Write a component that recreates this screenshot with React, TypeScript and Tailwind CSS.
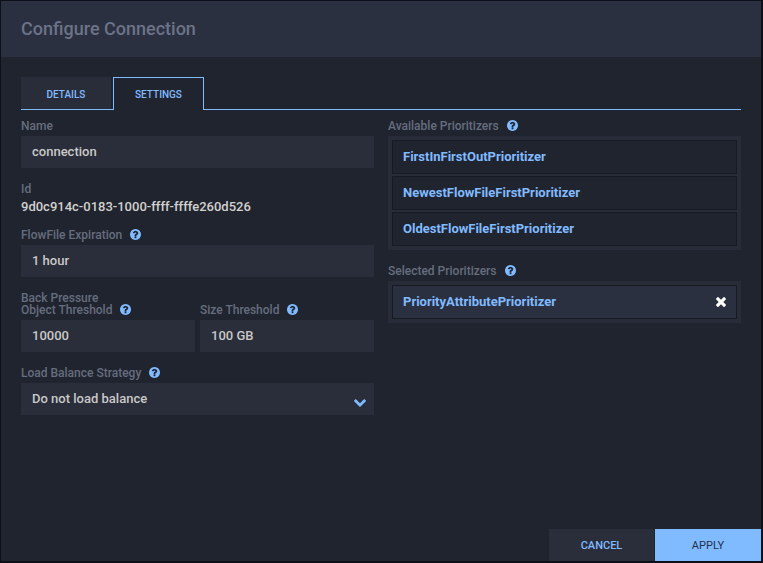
import { useState } from "react";
import type { ReactNode } from "react";

const labelClass = "block text-xs leading-3 font-medium text-[#666d7e]";
const fieldClass = "h-8 w-full bg-[#2a2e3b] px-[11px] text-[13px] font-medium text-[#c9c8c6] outline-none";

function QuestionIcon() {
  return (
    <svg viewBox="128 128 1536 1536" className="size-[11px]" fill="currentColor" aria-hidden="true">
      <path d="M1024 1376v-192q0-14-9-23t-23-9h-192q-14 0-23 9t-9 23v192q0 14 9 23t23 9h192q14 0 23-9t9-23zm256-672q0-88-55.5-163t-138.5-116-170-41q-243 0-371 213-15 24 8 42l132 100q7 6 19 6 16 0 25-12 53-68 86-92 34-24 86-24 48 0 85.5 26t37.5 59q0 38-20 61t-68 45q-63 28-115.5 86.5t-52.5 125.5v36q0 14 9 23t23 9h192q14 0 23-9t9-23q0-19 21.5-49.5t54.5-49.5q32-18 49-28.5t46-35 44.5-48 28-60.5 12.5-81zm384 192q0 209-103 385.5t-279.5 279.5-385.5 103-385.5-103-279.5-279.5-103-385.5 103-385.5 279.5-279.5 385.5-103 385.5 103 279.5 279.5 103 385.5z" />
    </svg>
  );
}

function ChevronIcon() {
  return (
    <svg
      viewBox="90 533 1612 1035"
      className="pointer-events-none absolute right-2 bottom-2 h-2 w-3 text-[#80bbff]"
      fill="currentColor"
      aria-hidden="true"
    >
      <path d="M1683 808l-742 741q-19 19-45 19t-45-19l-742-741q-19-19-19-45.5t19-45.5l166-165q19-19 45-19t45 19l531 531 531-531q19-19 45-19t45 19l166 165q19 19 19 45.5t-19 45.5z" />
    </svg>
  );
}

function RemoveIcon() {
  return (
    <svg viewBox="110 366 1188 1188" className="size-2.5" fill="currentColor" aria-hidden="true">
      <path d="M1298 1322q0 40-28 68l-136 136q-28 28-68 28t-68-28l-294-294-294 294q-28 28-68 28t-68-28l-136-136q-28-28-28-68t28-68l294-294-294-294q-28-28-28-68t28-68l136-136q28-28 68-28t68 28l294 294 294-294q28-28 68-28t68 28l136 136q28 28 28 68t-28 68l-294 294 294 294q28 28 28 68z" />
    </svg>
  );
}

function Help({ topic }: { topic: string }) {
  return (
    <button type="button" aria-label={`Help: ${topic}`} className="ml-2 text-[#80bbff]">
      <QuestionIcon />
    </button>
  );
}

function LabelRow({ id, help, children }: { id: string; help?: boolean; children: string }) {
  return (
    <div className="flex h-3 items-start">
      <label htmlFor={id} className={labelClass}>
        {children}
      </label>
      {help && <Help topic={children} />}
    </div>
  );
}

function TextField({ id, label, value, help }: { id: string; label: string; value: string; help?: boolean }) {
  return (
    <div className="flex flex-col gap-1">
      <LabelRow id={id} help={help}>{label}</LabelRow>
      <input id={id} type="text" defaultValue={value} className={`${fieldClass} pb-0.5`} />
    </div>
  );
}

function Prioritizers({ title, children }: { title: string; children: ReactNode }) {
  return (
    <section className="flex flex-col gap-1">
      <div className="flex h-3 items-start">
        <h2 className={labelClass}>{title}</h2>
        <Help topic={title} />
      </div>
      <ul className="flex flex-col gap-0.5 bg-[#282c38] p-1">{children}</ul>
    </section>
  );
}

const itemClass =
  "flex h-[34px] items-center justify-between border border-[#171a23] px-2.5 text-[13px] font-bold text-[#80bbff]";

export default function App() {
  const [tab, setTab] = useState("settings");
  const available = ["FirstInFirstOutPrioritizer", "NewestFlowFileFirstPrioritizer", "OldestFlowFileFirstPrioritizer"];

  return (
    <div className="flex min-h-screen bg-[#0d1019] pt-px pr-0.5 pb-0.5 pl-px font-['Roboto',sans-serif]">
      <div role="dialog" aria-labelledby="title" className="flex flex-1 flex-col bg-[#20242f]">
        <header className="flex h-14 items-center bg-[#2a303f] px-5">
          <h1 id="title" className="text-lg font-medium text-[#6c7388]">Configure Connection</h1>
        </header>

        <main className="flex-1 px-5 pt-5">
          <div role="tablist" className="flex h-[33px] text-[10px] font-medium text-[#80bbff]">
            <div className="flex w-[92px] border-b border-current pr-0.5">
              <button
                type="button"
                role="tab"
                aria-selected={tab === "details"}
                onClick={() => setTab("details")}
                className="flex-1 bg-[#292d3a] pt-0.5"
              >
                DETAILS
              </button>
            </div>
            <button
              type="button"
              role="tab"
              aria-selected={tab === "settings"}
              onClick={() => setTab("settings")}
              className="w-[91px] border border-b-0 border-current"
            >
              SETTINGS
            </button>
            <div className="flex-1 border-b border-current" />
          </div>

          <div className="grid grid-cols-2 gap-3.5 pt-2.5">
            <form className="flex flex-col">
              <TextField id="name" label="Name" value="connection" />
              <dl className="pt-[15px] pb-3.5">
                <dt className={labelClass}>Id</dt>
                <dd className="pt-1 text-[13px] leading-4 font-medium text-[#d2d1ce]">
                  9d0c914c-0183-1000-ffff-ffffe260d526
                </dd>
              </dl>
              <TextField id="expiration" label="FlowFile Expiration" value="1 hour" help />
              <fieldset className="mt-[15px]">
                <legend className={labelClass}>Back Pressure</legend>
                <div className="grid grid-cols-2 gap-[5px]">
                  <TextField id="objects" label="Object Threshold" value="10000" help />
                  <TextField id="size" label="Size Threshold" value="100 GB" help />
                </div>
              </fieldset>
              <div className="flex flex-col gap-1 pt-[15px]">
                <LabelRow id="strategy" help>Load Balance Strategy</LabelRow>
                <div className="relative">
                  <select id="strategy" className={`${fieldClass} block appearance-none`}>
                    <option>Do not load balance</option>
                  </select>
                  <ChevronIcon />
                </div>
              </div>
            </form>

            <div className="flex flex-col gap-[15px]">
              <Prioritizers title="Available Prioritizers">
                {available.map((name) => (
                  <li key={name} className={`${itemClass} bg-[#20242f]`}>{name}</li>
                ))}
              </Prioritizers>
              <Prioritizers title="Selected Prioritizers">
                <li className={`${itemClass} bg-[#2a303f]`}>
                  PriorityAttributePrioritizer
                  <button type="button" aria-label="Remove PriorityAttributePrioritizer" className="text-white">
                    <RemoveIcon />
                  </button>
                </li>
              </Prioritizers>
            </div>
          </div>
        </main>

        <footer className="flex justify-end gap-px text-[11px]">
          <button type="button" className="h-8 w-[105px] bg-[#2a2e3b] pt-0.5 font-medium text-[#80bbff]">CANCEL</button>
          <button type="button" className="h-8 w-[106px] bg-[#80bbff] pt-0.5 text-[#22304a]">APPLY</button>
        </footer>
      </div>
    </div>
  );
}
